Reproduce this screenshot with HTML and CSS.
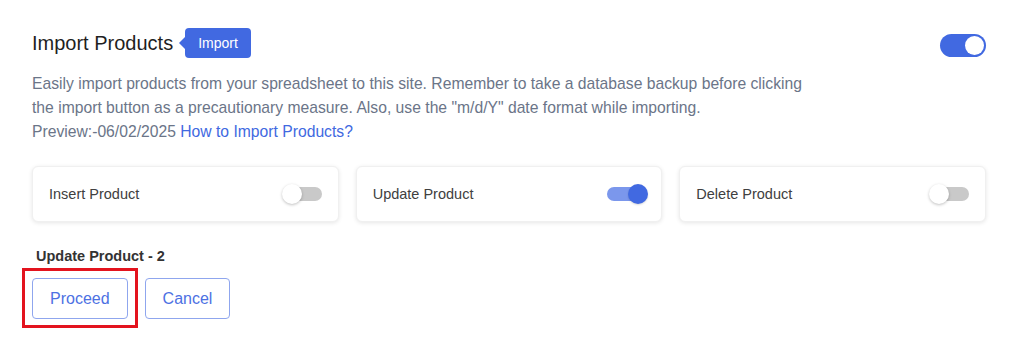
FILE: index.html
```html
<!DOCTYPE html>
<html lang="en">
<head>
<meta charset="utf-8">
<title>Import Products</title>
<link rel="stylesheet" href="styles.css">
</head>
<body>
<main class="panel">
  <header class="head">
    <div class="title-wrap">
      <h1 class="title">Import Products</h1>
      <span class="badge">Import</span>
    </div>
    <span class="switch switch-main" role="switch" aria-checked="true"><span class="knob"></span></span>
  </header>
  <p class="desc">Easily import products from your spreadsheet to this site. Remember to take a database backup before clicking<br>the import button as a precautionary measure. Also, use the "m/d/Y" date format while importing.<br>Preview:-06/02/2025 <a class="link" href="#">How to Import Products?</a></p>
  <section class="cards">
    <div class="card">
      <span class="card-label">Insert Product</span>
      <span class="mini off"><span class="mini-knob"></span></span>
    </div>
    <div class="card">
      <span class="card-label">Update Product</span>
      <span class="mini on"><span class="mini-knob"></span></span>
    </div>
    <div class="card">
      <span class="card-label">Delete Product</span>
      <span class="mini off"><span class="mini-knob"></span></span>
    </div>
  </section>
  <div class="status">Update Product - 2</div>
  <div class="actions">
    <span class="highlight"><button class="btn">Proceed</button></span>
    <button class="btn">Cancel</button>
  </div>
</main>
</body>
</html>
```

FILE: styles.css
```css
* { box-sizing: border-box; }
html, body { margin: 0; padding: 0; background: #fff; }
body {
  font-family: "Liberation Sans", Arial, sans-serif;
  color: #222;
  min-height: 345px;
}
.panel {
  padding: 28px 38px 26px 32px;
}
.head {
  display: flex;
  justify-content: space-between;
  align-items: center;
  height: 30px;
}
.title-wrap {
  display: flex;
  align-items: center;
  gap: 12px;
}
.title {
  margin: 0;
  font-size: 20px;
  font-weight: 400;
  color: #1f1f1f;
  line-height: 30px;
}
.badge {
  position: relative;
  display: inline-flex;
  align-items: center;
  height: 30px;
  padding: 0 13px;
  background: #4169e1;
  color: #fff;
  font-size: 14px;
  border-radius: 4px;
}
.badge::before {
  content: "";
  position: absolute;
  left: -6px;
  top: 50%;
  margin-top: -6px;
  border-top: 6px solid transparent;
  border-bottom: 6px solid transparent;
  border-right: 6px solid #4169e1;
}
.switch {
  display: inline-flex;
  align-items: center;
  justify-content: flex-end;
  width: 46px;
  height: 23px;
  padding: 2px;
  border-radius: 12px;
  background: #4169e1;
  margin-top: 5px;
}
.switch .knob {
  width: 19px;
  height: 19px;
  border-radius: 50%;
  background: #fff;
}
.desc {
  margin: 14px 0 0;
  font-size: 15.7px;
  line-height: 24px;
  color: #6b7588;
  white-space: nowrap;
}
.link {
  color: #4169e1;
  text-decoration: none;
}
.cards {
  display: grid;
  grid-template-columns: repeat(3, 1fr);
  gap: 17px;
  margin-top: 22px;
}
.card {
  display: flex;
  align-items: center;
  justify-content: space-between;
  height: 56px;
  padding: 0 16px 0 16px;
  background: #fff;
  border: 1px solid #f0f0f0;
  border-radius: 6px;
  box-shadow: 0 1px 4px rgba(0, 0, 0, 0.1);
}
.card-label {
  font-size: 14.5px;
  color: #404040;
}
.mini {
  position: relative;
  display: inline-block;
  width: 38px;
  height: 14px;
  border-radius: 7px;
}
.mini.off { background: #c9c9c9; }
.mini.on { background: #7b97ec; }
.mini-knob {
  position: absolute;
  top: -3px;
  width: 20px;
  height: 20px;
  border-radius: 50%;
}
.mini.off .mini-knob {
  left: -2px;
  background: #fff;
  box-shadow: 0 1px 3px rgba(0, 0, 0, 0.25);
}
.mini.on .mini-knob {
  right: -3px;
  background: #4169e1;
  box-shadow: 0 1px 2px rgba(0, 0, 0, 0.15);
}
.status {
  margin: 26px 0 0 4px;
  font-size: 14.5px;
  font-weight: 700;
  color: #333;
  line-height: 16px;
}
.actions {
  display: flex;
  align-items: flex-start;
  gap: 17px;
  margin-top: 14px;
}
.highlight {
  position: relative;
  display: inline-flex;
}
.highlight::after {
  content: "";
  position: absolute;
  left: -10px;
  right: -10px;
  top: -10px;
  bottom: -9px;
  border: 3px solid #e3131e;
  pointer-events: none;
}
.btn {
  font-family: inherit;
  font-size: 16px;
  line-height: 18px;
  height: 41px;
  padding: 0 17px;
  color: #4d71e3;
  background: #fff;
  border: 1px solid #8fa6ee;
  border-radius: 4px;
  cursor: pointer;
}
```
